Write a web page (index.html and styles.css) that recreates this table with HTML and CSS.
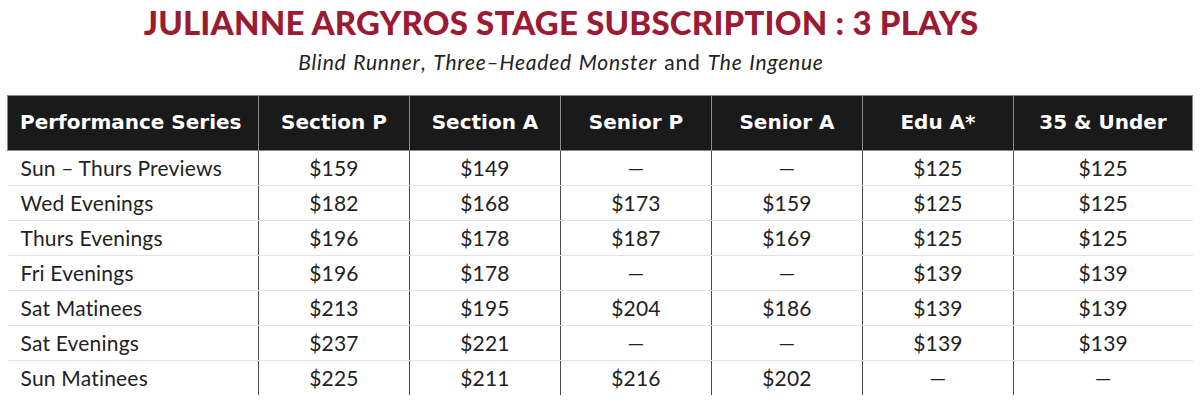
FILE: index.html
```html
<!DOCTYPE html>
<html>
<head>
<meta charset="utf-8">
<link rel="stylesheet" href="styles.css">
</head>
<body>
<div class="page">
  <h1 class="title">JULIANNE ARGYROS STAGE SUBSCRIPTION : 3 PLAYS</h1>
  <p class="subtitle"><i>Blind Runner</i>, <i>Three–Headed Monster</i> and <i>The Ingenue</i></p>
  <table class="prices">
    <colgroup>
      <col class="c-series"><col class="c-num"><col class="c-num"><col class="c-num"><col class="c-num"><col class="c-num"><col class="c-last">
    </colgroup>
    <thead>
      <tr>
        <th>Performance Series</th><th>Section P</th><th>Section A</th><th>Senior P</th><th>Senior A</th><th>Edu A*</th><th>35 &amp; Under</th>
      </tr>
    </thead>
    <tbody>
      <tr><td>Sun – Thurs Previews</td><td>$159</td><td>$149</td><td>—</td><td>—</td><td>$125</td><td>$125</td></tr>
      <tr><td>Wed Evenings</td><td>$182</td><td>$168</td><td>$173</td><td>$159</td><td>$125</td><td>$125</td></tr>
      <tr><td>Thurs Evenings</td><td>$196</td><td>$178</td><td>$187</td><td>$169</td><td>$125</td><td>$125</td></tr>
      <tr><td>Fri Evenings</td><td>$196</td><td>$178</td><td>—</td><td>—</td><td>$139</td><td>$139</td></tr>
      <tr><td>Sat Matinees</td><td>$213</td><td>$195</td><td>$204</td><td>$186</td><td>$139</td><td>$139</td></tr>
      <tr><td>Sat Evenings</td><td>$237</td><td>$221</td><td>—</td><td>—</td><td>$139</td><td>$139</td></tr>
      <tr><td>Sun Matinees</td><td>$225</td><td>$211</td><td>$216</td><td>$202</td><td>—</td><td>—</td></tr>
    </tbody>
  </table>
</div>
</body>
</html>
```
FILE: styles.css
```css
html, body {
  margin: 0;
  padding: 0;
  background: #ffffff;
}
.page {
  padding: 0 7px;
  font-family: Lato, "Liberation Sans", sans-serif;
  color: #222222;
}
.title {
  margin: 0;
  padding: 4px 78px 0 0;
  text-align: center;
  font-size: 33px;
  line-height: 36px;
  font-weight: 900;
  color: #9b1b33;
  letter-spacing: 0.2px;
}
.subtitle {
  margin: 0;
  padding: 9px 78px 0 0;
  text-align: center;
  font-size: 21px;
  line-height: 26px;
  font-weight: 400;
  letter-spacing: 0.8px;
  word-spacing: 1px;
  color: #222222;
}
.subtitle i {
  font-style: italic;
}
.prices {
  margin-top: 20px;
  width: 1186px;
  border-collapse: collapse;
  table-layout: fixed;
}
.c-series { width: 251px; }
.c-num { width: 151px; }
.c-last { width: 179px; }
.prices th {
  height: 51px;
  background: #1a1a1a;
  color: #ffffff;
  font-family: "DejaVu Sans", Lato, sans-serif;
  font-size: 20px;
  font-weight: 700;
  border: 1px solid #8c8c8c;
  padding: 0 0 3px 0;
  text-align: center;
}
.prices th:first-child {
  text-align: left;
  padding-left: 12px;
}
.prices td {
  height: 32px;
  padding: 0 0 2px 0;
  font-size: 21px;
  font-weight: 400;
  letter-spacing: 0.2px;
  text-align: center;
  border-left: 1px solid #4a4a4a;
  border-bottom: 1px solid #e2e2e2;
}
.prices td:first-child {
  text-align: left;
  padding-left: 13px;
  border-left: none;
}
.prices tbody tr:last-child td {
  border-bottom: none;
}
```
